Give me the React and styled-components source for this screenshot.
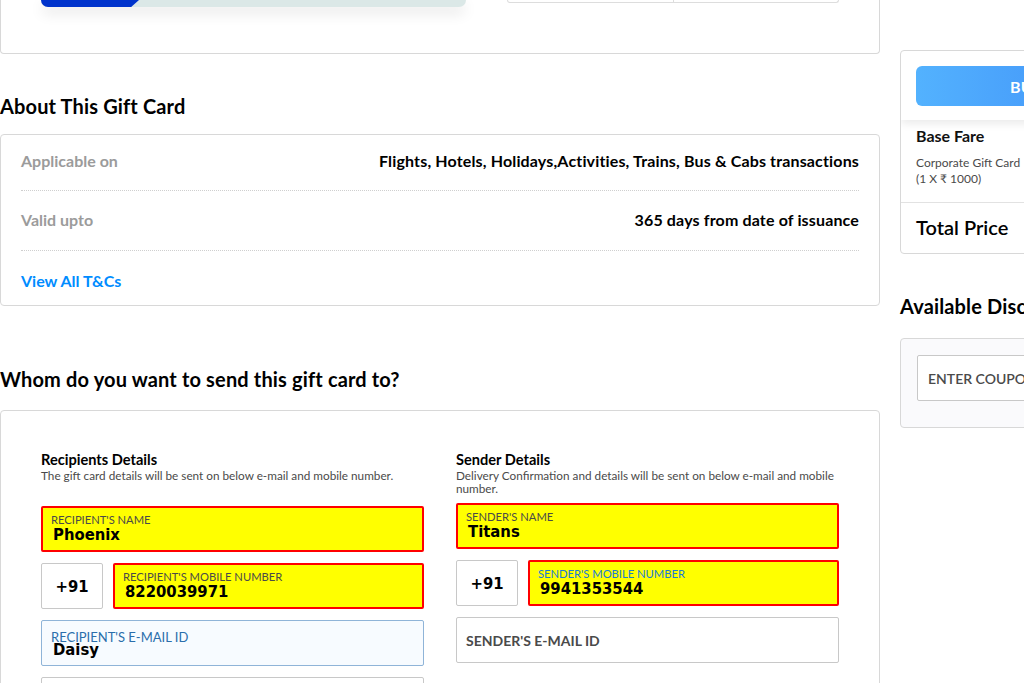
import React from "react"
import styled, { createGlobalStyle } from "styled-components"

const GlobalStyle = createGlobalStyle`
  body {
    margin: 0;
    background: #fff;
    font-family: Lato, "Open Sans", sans-serif;
    color: #000;
    overflow: hidden;
  }
`

const Page = styled.div`
  display: flex;
  gap: 20px;
  align-items: flex-start;
  width: 1200px;
  height: 683px;
  overflow: hidden;
`

const MainColumn = styled.div`
  width: 880px;
  flex-shrink: 0;
`

const SideColumn = styled.div`
  width: 300px;
  flex-shrink: 0;
  padding-top: 50px;
`

const Card = styled.div`
  border: 1px solid #d8d8d8;
  border-radius: 4px;
  background: ${({ tint }) => (tint ? "#fafafc" : "#fff")};
`

const TopCard = styled(Card)`
  border-top: none;
  border-radius: 0 0 4px 4px;
  height: 53px;
  display: flex;
  justify-content: space-between;
  align-items: flex-start;
  padding: 0 40px;
`

const Banner = styled.div`
  width: 425px;
  height: 7px;
  display: flex;
  background: #dbe8e7;
  border-radius: 0 0 8px 8px;
  overflow: hidden;
  box-shadow: 0 6px 14px rgba(0, 0, 0, 0.12);
`

const BannerTab = styled.div`
  width: 98px;
  background: #0033cc;
  clip-path: polygon(0 0, 100% 0, 92% 100%, 0 100%);
`

const InfoTable = styled.div`
  width: 330px;
  height: 2px;
  display: flex;
  border: 1px solid #ddd;
  border-top: none;
  border-radius: 0 0 3px 3px;
`

const InfoCell = styled.div`
  flex: 1;
  & + & {
    border-left: 1px solid #ddd;
  }
`

const Heading = styled.h2`
  margin: ${({ top }) => top}px 0 ${({ bottom }) => bottom}px;
  font-size: 20px;
  line-height: 24px;
  font-weight: 700;
  letter-spacing: 0.15px;
  white-space: nowrap;
`

const AboutCard = styled(Card)`
  padding: 0 20px;
`

const InfoRow = styled.div`
  display: flex;
  justify-content: space-between;
  align-items: center;
  padding: 19px 0 20px;
  line-height: 20px;
  border-bottom: 1px dotted #cfcfcf;
  &:first-child {
    padding-top: 16px;
    padding-bottom: 19px;
  }
`

const InfoLabel = styled.span`
  font-size: 16px;
  font-weight: 700;
  color: #9b9b9b;
`

const InfoValue = styled.span`
  font-size: 16px;
  font-weight: 700;
  letter-spacing: 0.15px;
  color: #000;
`

const LinkRow = styled.div`
  padding: 20px 0 14px;
  line-height: 20px;
  font-size: 16px;
  font-weight: 700;
  color: #008cff;
`

const FormCard = styled(Card)`
  display: grid;
  grid-template-columns: 383px 383px;
  column-gap: 32px;
  align-items: start;
  padding: 41px 40px 40px;
  height: 400px;
`

const FormColumn = styled.div`
  display: flex;
  flex-direction: column;
  gap: 11px;
`

const ColumnHead = styled.div`
  margin-bottom: ${({ space }) => space}px;
`

const ColumnTitle = styled.div`
  font-size: 14.6px;
  line-height: 16px;
  font-weight: 700;
`

const ColumnNote = styled.div`
  margin-top: 1px;
  font-size: 11.75px;
  line-height: 13px;
  color: #4a4a4a;
`

const Field = styled.div`
  flex: ${({ grow }) => (grow ? "1" : "none")};
  height: 46px;
  box-sizing: border-box;
  padding: ${({ variant }) =>
    variant === "filled" ? "5px 8px 0" : variant === "focus" ? "10px 9px 0" : "0 9px"};
  border-radius: 2px;
  background: ${({ variant }) =>
    variant === "filled" ? "#ffff00" : variant === "focus" ? "#f7fbff" : "#fff"};
  border: ${({ variant }) =>
    variant === "filled"
      ? "2px solid #ff0000"
      : variant === "focus"
      ? "1px solid #8fb4d8"
      : "1px solid #c8c8c8"};
  display: flex;
  flex-direction: column;
  justify-content: ${({ variant }) => (variant === "empty" ? "center" : "flex-start")};
`

const FieldLabel = styled.div`
  font-size: ${({ big }) => (big ? "13px" : "11.2px")};
  line-height: ${({ big }) => (big ? "12px" : "13px")};
  color: ${({ tone }) =>
    tone === "blue" ? "#1a7bd6" : tone === "deep" ? "#2a6eab" : "#4a4a4a"};
  white-space: nowrap;
`

const FieldValue = styled.div`
  margin-top: ${({ tight }) => (tight ? "-2px" : "0")};
  padding-left: 2px;
  font-family: "DejaVu Sans Condensed", "DejaVu Sans", sans-serif;
  font-weight: 700;
  font-size: 16.5px;
  line-height: 18px;
  color: #000;
`

const Placeholder = styled.div`
  font-size: 14px;
  font-weight: 700;
  color: #4a4a4a;
`

const PhoneRow = styled.div`
  display: flex;
  gap: 10px;
`

const CountryCode = styled.div`
  width: 62px;
  height: 46px;
  box-sizing: border-box;
  border: 1px solid #c8c8c8;
  border-radius: 2px;
  display: flex;
  align-items: center;
  justify-content: center;
  font-family: "DejaVu Sans Condensed", "DejaVu Sans", sans-serif;
  font-weight: 700;
  font-size: 16.5px;
`

const FareCard = styled(Card)`
  overflow: hidden;
`

const BuyArea = styled.div`
  padding: 15px 15px 14px;
  box-shadow: 0 4px 8px rgba(0, 0, 0, 0.08);
`

const BuyButton = styled.div`
  height: 40px;
  border-radius: 6px;
  background: linear-gradient(90deg, #53b2fe, #3a86f7);
  color: #fff;
  font-weight: 700;
  font-size: 16px;
  display: flex;
  align-items: center;
  justify-content: center;
  letter-spacing: 0.3px;
`

const FareBlock = styled.div`
  padding: ${({ pad }) => pad};
  & + & {
    border-top: 1px solid #e2e2e2;
  }
`

const FareTitle = styled.div`
  font-size: 16px;
  line-height: 18px;
  font-weight: 700;
  color: #111;
`

const FareNote = styled.div`
  margin-top: 10px;
  font-size: 12px;
  line-height: 16px;
  color: #4a4a4a;
`

const TotalTitle = styled.div`
  font-size: 20px;
  line-height: 24px;
  font-weight: 600;
`

const CouponCard = styled(Card)`
  padding: 16px 16px 26px;
`

const CouponInput = styled.div`
  height: 46px;
  box-sizing: border-box;
  border: 1px solid #c8c8c8;
  border-radius: 2px;
  background: #fff;
  display: flex;
  align-items: center;
  padding-left: 10px;
  font-size: 14px;
  font-weight: 600;
  color: #4a4a4a;
  white-space: nowrap;
`

export default function App() {
  return (
    <Page>
      <GlobalStyle />
      <MainColumn>
        <TopCard>
          <Banner>
            <BannerTab />
          </Banner>
          <InfoTable>
            <InfoCell />
            <InfoCell />
          </InfoTable>
        </TopCard>

        <Heading top={40} bottom={16}>About This Gift Card</Heading>
        <AboutCard>
          <InfoRow>
            <InfoLabel>Applicable on</InfoLabel>
            <InfoValue>Flights, Hotels, Holidays,Activities, Trains, Bus &amp; Cabs transactions</InfoValue>
          </InfoRow>
          <InfoRow>
            <InfoLabel>Valid upto</InfoLabel>
            <InfoValue>365 days from date of issuance</InfoValue>
          </InfoRow>
          <LinkRow>View All T&amp;Cs</LinkRow>
        </AboutCard>

        <Heading top={61} bottom={19}>Whom do you want to send this gift card to?</Heading>
        <FormCard>
          <FormColumn>
            <ColumnHead space={13}>
              <ColumnTitle>Recipients Details</ColumnTitle>
              <ColumnNote>The gift card details will be sent on below e-mail and mobile number.</ColumnNote>
            </ColumnHead>
            <Field variant="filled">
              <FieldLabel>RECIPIENT'S NAME</FieldLabel>
              <FieldValue>Phoenix</FieldValue>
            </Field>
            <PhoneRow>
              <CountryCode>+91</CountryCode>
              <Field variant="filled" grow>
                <FieldLabel>RECIPIENT'S MOBILE NUMBER</FieldLabel>
                <FieldValue>8220039971</FieldValue>
              </Field>
            </PhoneRow>
            <Field variant="focus">
              <FieldLabel big tone="deep">RECIPIENT'S E-MAIL ID</FieldLabel>
              <FieldValue tight>Daisy</FieldValue>
            </Field>
            <Field variant="empty" />
          </FormColumn>

          <FormColumn>
            <ColumnHead space={-3}>
              <ColumnTitle>Sender Details</ColumnTitle>
              <ColumnNote>Delivery Confirmation and details will be sent on below e-mail and mobile number.</ColumnNote>
            </ColumnHead>
            <Field variant="filled">
              <FieldLabel>SENDER'S NAME</FieldLabel>
              <FieldValue>Titans</FieldValue>
            </Field>
            <PhoneRow>
              <CountryCode>+91</CountryCode>
              <Field variant="filled" grow>
                <FieldLabel tone="blue">SENDER'S MOBILE NUMBER</FieldLabel>
                <FieldValue>9941353544</FieldValue>
              </Field>
            </PhoneRow>
            <Field variant="empty">
              <Placeholder>SENDER'S E-MAIL ID</Placeholder>
            </Field>
          </FormColumn>
        </FormCard>
      </MainColumn>

      <SideColumn>
        <FareCard>
          <BuyArea>
            <BuyButton>BUY NOW</BuyButton>
          </BuyArea>
          <FareBlock pad="7px 15px 15px">
            <FareTitle>Base Fare</FareTitle>
            <FareNote>
              Corporate Gift Card
              <br />
              (1 X ₹ 1000)
            </FareNote>
          </FareBlock>
          <FareBlock pad="12px 15px 14px">
            <TotalTitle>Total Price</TotalTitle>
          </FareBlock>
        </FareCard>

        <Heading top={40} bottom={20}>Available Discounts</Heading>
        <CouponCard tint>
          <CouponInput>ENTER COUPON CODE</CouponInput>
        </CouponCard>
      </SideColumn>
    </Page>
  )
}
